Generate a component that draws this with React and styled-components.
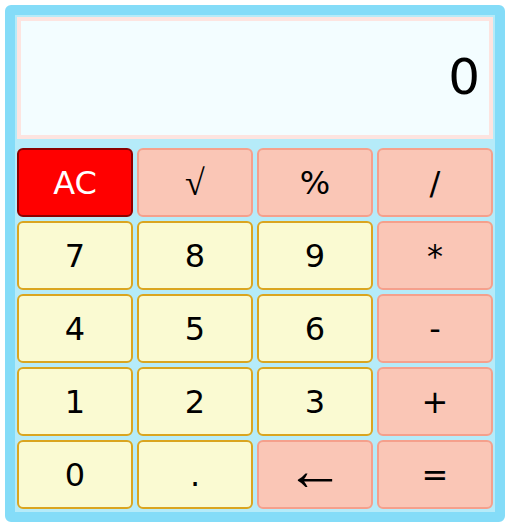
import React from "react";
import styled, { createGlobalStyle, css } from "styled-components";

const GlobalStyle = createGlobalStyle`
  body {
    margin: 0;
    background: #ffffff;
    font-family: "DejaVu Sans", "Liberation Sans", sans-serif;
  }
`;

const keys = [
  { label: "AC", kind: "clear" },
  { label: "√", kind: "op", glyph: "root" },
  { label: "%", kind: "op" },
  { label: "/", kind: "op" },
  { label: "7", kind: "num" },
  { label: "8", kind: "num" },
  { label: "9", kind: "num" },
  { label: "*", kind: "op" },
  { label: "4", kind: "num" },
  { label: "5", kind: "num" },
  { label: "6", kind: "num" },
  { label: "-", kind: "op" },
  { label: "1", kind: "num" },
  { label: "2", kind: "num" },
  { label: "3", kind: "num" },
  { label: "+", kind: "op" },
  { label: "0", kind: "num" },
  { label: ".", kind: "num" },
  { label: "←", kind: "op", glyph: "arrow" },
  { label: "=", kind: "op" },
];

const colors = {
  num: { bg: "#fafad2", border: "#daa520", text: "#000" },
  op: { bg: "#fac6b6", border: "#f5a08c", text: "#000" },
  clear: { bg: "#ff0000", border: "#8b0000", text: "#fff" },
};

const glyphStyles = {
  root: css`
    font-family: "Liberation Serif", "DejaVu Serif", serif;
    font-size: 36px;
  `,
  arrow: css`
    font-family: "Liberation Serif", "DejaVu Serif", serif;
    font-size: 58px;
    line-height: 1;
    padding-bottom: 12px;
  `,
};

const App = () => {
  return (
    <Page>
      <GlobalStyle />
      <Calculator>
        <Display>0</Display>
        <Keypad>
          {keys.map((key) => (
            <Key key={key.label} kind={key.kind} glyph={key.glyph}>
              {key.label}
            </Key>
          ))}
        </Keypad>
      </Calculator>
    </Page>
  );
};

export default App;

const Page = styled.div`
  padding: 5px;
`;

const Calculator = styled.div`
  box-sizing: border-box;
  width: 500px;
  border: 10px solid #84dcf8;
  border-radius: 6px;
  background-color: #b5ebf9;
  padding: 2px 2px 3px 2px;
`;

const Display = styled.div`
  box-sizing: border-box;
  height: 122px;
  border: 4px solid #fde4e0;
  background-color: #f3fdff;
  display: flex;
  align-items: center;
  justify-content: flex-end;
  padding: 0 9px 2px;
  font-size: 50px;
  color: #000;
`;

const Keypad = styled.div`
  margin-top: 9px;
  display: grid;
  grid-template-columns: repeat(4, 116px);
  grid-auto-rows: 69px;
  gap: 4px;
`;

const Key = styled.button.withConfig({
  shouldForwardProp: (prop) => prop !== "kind" && prop !== "glyph",
})`
  box-sizing: border-box;
  border: 2px solid ${(p) => colors[p.kind].border};
  border-radius: 6px;
  background-color: ${(p) => colors[p.kind].bg};
  color: ${(p) => colors[p.kind].text};
  font-family: "DejaVu Sans", "Liberation Sans", sans-serif;
  font-size: 32px;
  padding: 0;
  cursor: pointer;
  ${(p) => p.glyph && glyphStyles[p.glyph]}
`;
